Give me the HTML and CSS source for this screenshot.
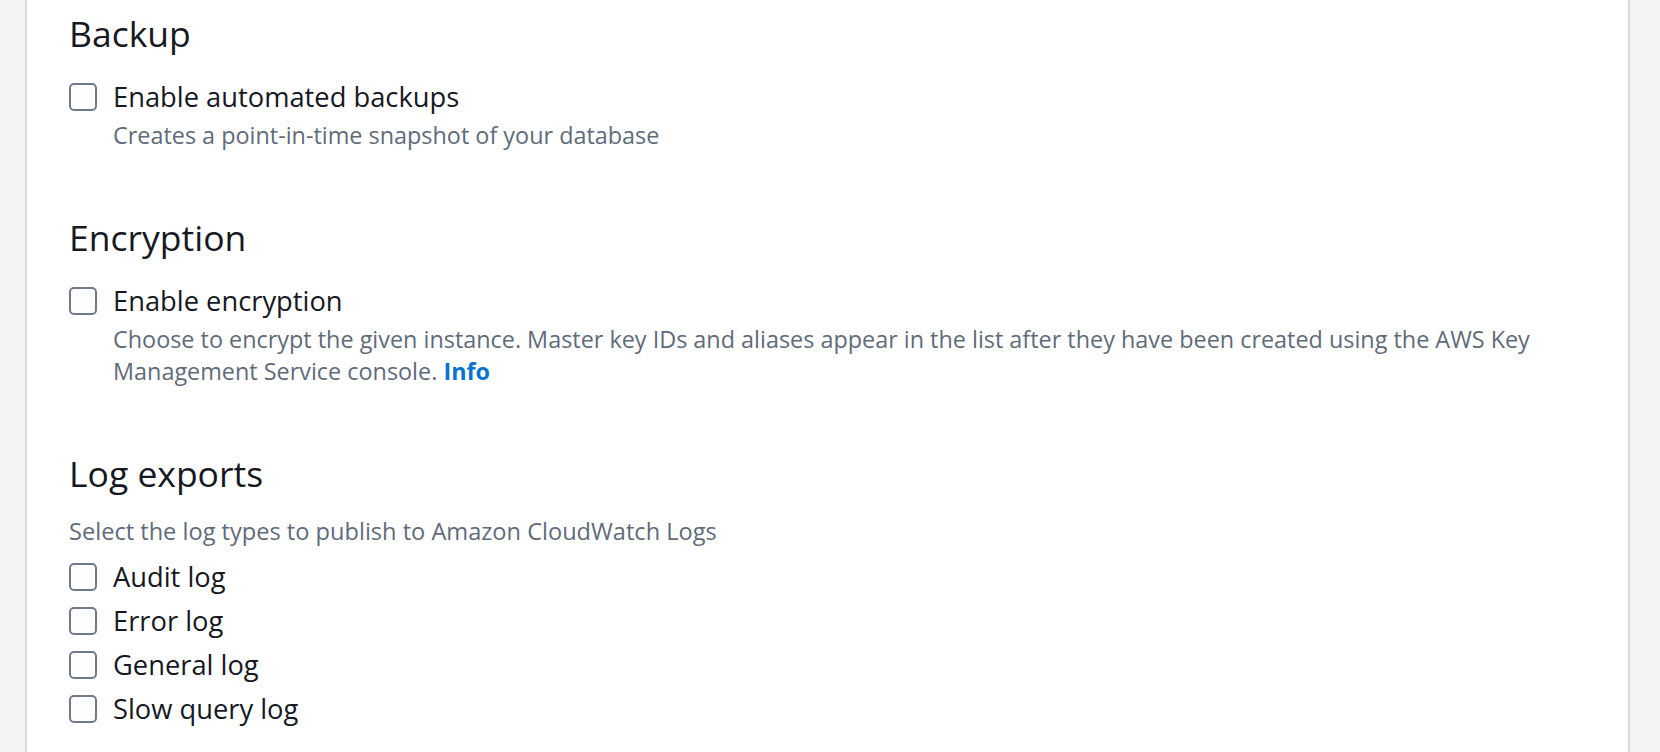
FILE: index.html
```html
<!DOCTYPE html>
<html lang="en">
<head>
<meta charset="utf-8">
<title>Database options</title>
<link rel="stylesheet" href="styles.css">
</head>
<body>
<div class="page">
  <main class="panel">
    <section class="section">
      <h2 class="heading">Backup</h2>
      <div class="field">
        <label class="check">
          <input type="checkbox" class="box">
          <span class="label">Enable automated backups</span>
        </label>
        <p class="desc">Creates a point-in-time snapshot of your database</p>
      </div>
    </section>

    <section class="section">
      <h2 class="heading">Encryption</h2>
      <div class="field">
        <label class="check">
          <input type="checkbox" class="box">
          <span class="label">Enable encryption</span>
        </label>
        <p class="desc"><span class="desc-text">Choose to encrypt the given instance. Master key IDs and aliases appear in the list after they have been created using the AWS Key Management Service console.</span> <a class="info" href="#">Info</a></p>
      </div>
    </section>

    <section class="section">
      <h2 class="heading">Log exports</h2>
      <p class="lead">Select the log types to publish to Amazon CloudWatch Logs</p>
      <div class="list">
        <label class="check"><input type="checkbox" class="box"><span class="label">Audit log</span></label>
        <label class="check"><input type="checkbox" class="box"><span class="label">Error log</span></label>
        <label class="check"><input type="checkbox" class="box"><span class="label">General log</span></label>
        <label class="check"><input type="checkbox" class="box"><span class="label">Slow query log</span></label>
      </div>
    </section>
  </main>
</div>
</body>
</html>
```

FILE: styles.css
```css
* { box-sizing: border-box; }

html, body {
  margin: 0;
  padding: 0;
  height: 100%;
  background: #f2f3f3;
  font-family: "Open Sans", "Noto Sans", sans-serif;
  color: #16191f;
  overflow: hidden;
}

.page {
  height: 100%;
  padding: 0 32px 0 27px;
}

.panel {
  height: 100%;
  background: #ffffff;
  box-shadow: -1px 0 0 0 #d5dbdb, 1px 0 0 0 #d5dbdb, -2px 0 1px 0 rgba(0, 28, 36, 0.08), 2px 0 1px 0 rgba(0, 28, 36, 0.08);
  padding: 11px 42px 0 42px;
  display: flex;
  flex-direction: column;
  gap: 64px;
}

.section {
  display: flex;
  flex-direction: column;
}

.heading {
  margin: 0;
  font-size: 35.5px;
  line-height: 44px;
  font-weight: 400;
  color: #16191f;
}

.field {
  margin-top: 22px;
  display: flex;
  flex-direction: column;
}

.check {
  display: flex;
  align-items: center;
  gap: 16px;
  height: 40px;
  cursor: pointer;
}

.box {
  appearance: none;
  -webkit-appearance: none;
  margin: 0;
  width: 28px;
  height: 28px;
  border: 2px solid #6f7b8a;
  border-radius: 5px;
  background: #fff;
  flex: none;
}

.label {
  font-size: 27.3px;
  line-height: 40px;
  color: #16191f;
}

.desc {
  margin: 2px 0 0 44px;
  font-size: 23.4px;
  line-height: 32px;
  color: #5f6b7a;
  max-width: 1450px;
}

.info {
  color: #0972d3;
  font-weight: 700;
  text-decoration: none;
}

.lead {
  margin: 20px 0 0 0;
  font-size: 23.6px;
  line-height: 32px;
  color: #5f6b7a;
}

.list {
  margin-top: 10px;
  display: flex;
  flex-direction: column;
  gap: 4px;
}
```
